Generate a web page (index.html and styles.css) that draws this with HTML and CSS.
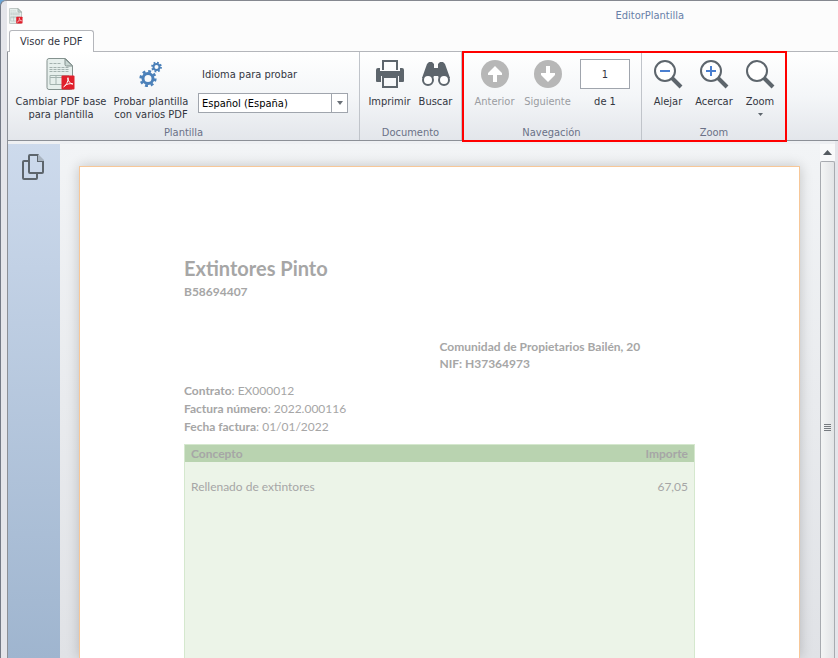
FILE: index.html
```html
<!DOCTYPE html>
<html lang="es">

<head>
  <meta charset="UTF-8">
  <meta name="viewport" content="width=device-width, initial-scale=1.0">
  <title>EditorPlantilla</title>
  <link rel="stylesheet" href="styles.css">
</head>

<body>
  <svg class="defs" width="0" height="0" aria-hidden="true">
    <symbol id="pdf-doc" viewBox="0 0 29 32">
      <path d="M2.500 .5h16.500l7 7v22a2 2 0 0 1-2 2h-21.500a2 2 0 0 1-2-2v-27a2 2 0 0 1 2-2z" fill="#e6efec" stroke="#84928f" />
      <path d="M18.500 1v5.500a1.500 1.500 0 0 0 1.500 1.500h6z" fill="#c8d6d2" stroke="#84928f" />
      <path d="M3 5.500h11M3 9.500h20M3 11.500h20M3 13.500h20" stroke="#a3b1ae" stroke-dasharray="3 1" />
      <path d="M3.500 17.500h19v9h-19zM3.500 19.500h19M9.500 17.500v9" fill="none" stroke="#a3b3af" />
      <rect x="15" y="17.500" width="13" height="14" rx="1" fill="#e01f2b" />
      <path d="M17 29c2-1 5-5 4.500-9.500M21.300 20c.2 3 2 5.500 5 6M18 28c2-2 5-2.800 8.500-2" fill="none" stroke="#fff" />
    </symbol>
  </svg>

  <div class="window">
    <header class="titlebar">
      <svg class="app-icon"><use href="#pdf-doc" /></svg>
      <h1 class="title">EditorPlantilla</h1>
    </header>

    <nav class="tabs">
      <button class="tab" type="button">Visor de PDF</button>
    </nav>

    <div class="ribbon">
      <section class="group group-template">
        <div class="tools">
          <button class="tool tool-base" type="button">
            <svg class="icon"><use href="#pdf-doc" /></svg>
            <span>Cambiar PDF base<br>para plantilla</span>
          </button>
          <button class="tool tool-test" type="button">
            <svg class="icon" viewBox="0 0 32 32" fill="none" stroke="#4b80b9">
              <circle cx="13" cy="20.500" r="5" stroke-width="3" />
              <circle cx="13" cy="20.500" r="7.300" stroke-width="2.600" stroke-dasharray="2.870 2.863" />
              <circle cx="21.500" cy="9" r="3" stroke-width="2" />
              <circle cx="21.500" cy="9" r="4.500" stroke-width="1.800" stroke-dasharray="1.770 1.764" />
            </svg>
            <span>Probar plantilla<br>con varios PDF</span>
          </button>
          <div class="language">
            <label for="language">Idioma para probar</label>
            <div class="select">
              <select id="language">
                <option>Español (España)</option>
              </select>
            </div>
          </div>
        </div>
        <h2 class="caption">Plantilla</h2>
      </section>

      <section class="group group-document">
        <div class="tools">
          <button class="tool" type="button">
            <svg class="icon" viewBox="0 0 32 32">
              <path d="M8 2h16v10h-2V4H10v8H8z" fill="#5d656c" />
              <path d="M2 12a2 2 0 0 1 2-2h2v3h20v-3h2a2 2 0 0 1 2 2v11a1 1 0 0 1-1 1h-4v-6H7v6H3a1 1 0 0 1-1-1z" fill="#5d656c" />
              <path d="M8 18h16v12H8zM10 20v8h12v-8z" fill="#5d656c" fill-rule="evenodd" />
            </svg>
            <span>Imprimir</span>
          </button>
          <button class="tool" type="button">
            <svg class="icon" viewBox="0 0 32 32">
              <path d="M9 4h3l2 2v4h4V6l2-2h3l2 2 5 14-6 1-3 3-3-6h-4l-3 6-3-3-6-1L7 6z" fill="#5d656c" />
              <circle cx="8" cy="22" r="5" fill="#fff" stroke="#5d656c" stroke-width="2" />
              <circle cx="24" cy="22" r="5" fill="#fff" stroke="#5d656c" stroke-width="2" />
            </svg>
            <span>Buscar</span>
          </button>
        </div>
        <h2 class="caption">Documento</h2>
      </section>

      <div class="highlight">
        <section class="group group-navigation">
          <div class="tools">
            <button class="tool" type="button" disabled>
              <svg class="icon" viewBox="0 0 32 32">
                <circle cx="16" cy="16" r="14" fill="#b7b7b7" />
                <path d="M16 8l7 7v2h-5v7h-4v-7H9v-2z" fill="#fff" />
              </svg>
              <span>Anterior</span>
            </button>
            <button class="tool" type="button" disabled>
              <svg class="icon" viewBox="0 0 32 32">
                <circle cx="16" cy="16" r="14" fill="#b7b7b7" />
                <path d="M16 24l7-7v-2h-5V8h-4v7H9v2z" fill="#fff" />
              </svg>
              <span>Siguiente</span>
            </button>
            <div class="page-number">
              <input id="page" type="text" value="1">
              <label for="page">de 1</label>
            </div>
          </div>
          <h2 class="caption">Navegación</h2>
        </section>

        <section class="group group-zoom">
          <div class="tools">
            <button class="tool" type="button">
              <svg class="icon" viewBox="0 0 32 32" fill="none">
                <path d="M20 20l9 9" stroke="#5d656c" stroke-width="4" />
                <circle cx="13" cy="13" r="10" fill="#fff" stroke="#5d656c" stroke-width="2" />
                <path d="M8 13h10" stroke="#4a7fd0" stroke-width="2" />
              </svg>
              <span>Alejar</span>
            </button>
            <button class="tool" type="button">
              <svg class="icon" viewBox="0 0 32 32" fill="none">
                <path d="M20 20l9 9" stroke="#5d656c" stroke-width="4" />
                <circle cx="13" cy="13" r="10" fill="#fff" stroke="#5d656c" stroke-width="2" />
                <path d="M8 13h10M13 8v10" stroke="#4a7fd0" stroke-width="2" />
              </svg>
              <span>Acercar</span>
            </button>
            <button class="tool" type="button">
              <svg class="icon" viewBox="0 0 32 32" fill="none">
                <path d="M20 20l9 9" stroke="#5d656c" stroke-width="4" />
                <circle cx="13" cy="13" r="10" fill="#fff" stroke="#5d656c" stroke-width="2" />
              </svg>
              <span>Zoom</span>
              <svg class="caret" viewBox="0 0 5 3"><path d="M0 0h5L2.500 3z" fill="#5d656c" /></svg>
            </button>
          </div>
          <h2 class="caption">Zoom</h2>
        </section>
      </div>
    </div>

    <main class="workspace">
      <aside class="sidebar">
        <button class="pages-btn" type="button" aria-label="Páginas">
          <svg class="pages-icon" viewBox="0 0 22 26" fill="none" stroke="#5d656c" stroke-width="2">
            <path d="M6 7H2a1 1 0 0 0-1 1v16a1 1 0 0 0 1 1h12a1 1 0 0 0 1-1v-4" />
            <path d="M16 1H8a1 1 0 0 0-1 1v16a1 1 0 0 0 1 1h12a1 1 0 0 0 1-1V7h-5z" />
            <path d="M16 0l6 6v1h-6z" fill="#a9b4c0" stroke="none" />
          </svg>
        </button>
      </aside>

      <div class="viewer">
        <article class="page">
          <h2 class="company">Extintores Pinto</h2>
          <p class="tax-id">B58694407</p>

          <div class="customer">
            <p>Comunidad de Propietarios Bailén, 20</p>
            <p>NIF: H37364973</p>
          </div>

          <div class="details">
            <p><b>Contrato</b>: EX000012</p>
            <p><b>Factura número</b>: 2022.000116</p>
            <p><b>Fecha factura</b>: 01/01/2022</p>
          </div>

          <table class="lines">
            <thead>
              <tr>
                <th>Concepto</th>
                <th class="amount">Importe</th>
              </tr>
            </thead>
            <tbody>
              <tr>
                <td>Rellenado de extintores</td>
                <td class="amount">67,05</td>
              </tr>
            </tbody>
          </table>
        </article>
      </div>

      <div class="scrollbar">
        <button class="scroll-up" type="button" aria-label="Subir">
          <svg class="arrow" viewBox="0 0 9 5"><path d="M4.500 0L9 5H0z" fill="#555b61" /></svg>
        </button>
        <div class="thumb"><span class="grip"></span></div>
      </div>
    </main>
  </div>
</body>

</html>
```
FILE: styles.css
```css
* {
  box-sizing: border-box;
}

body {
  margin: 0;
  height: 100vh;
  overflow: hidden;
  background-color: #6aa5d8;
  font: 11px/13px "DejaVu Sans Condensed", "DejaVu Sans", sans-serif;
  color: #33363f;
}

h1,
h2,
p {
  margin: 0;
  font: inherit;
}

button,
input,
select {
  margin: 0;
  padding: 0;
  font: inherit;
  color: inherit;
}

button {
  background: none;
  border: none;
}

svg {
  display: block;
}

.defs {
  position: absolute;
}

.window {
  height: 100vh;
  display: flex;
  flex-direction: column;
  padding: 0 3px 0 6px;
  background-color: #e4e5ea;
  border-top: 1px solid #858890;
  border-left: 1px solid #747a86;
  border-top-left-radius: 6px;
}

.titlebar {
  height: 29px;
  flex: none;
  display: flex;
  justify-content: space-between;
  align-items: center;
  padding: 0 154px 0 2px;
  margin-right: -3px;
  background-color: #fcfcfc;
}

.app-icon {
  width: 14px;
  height: 16px;
}

.title {
  color: #6880a8;
}

.tabs {
  height: 22px;
  flex: none;
  margin-right: -3px;
  padding-left: 2px;
  background-color: #fcfcfc;
  border-bottom: 1px solid #b4b6bb;
}

.tab {
  height: 22px;
  padding: 0 10px;
  background-color: #fff;
  border: 1px solid #b4b6bb;
  border-bottom: none;
  border-radius: 3px 3px 0 0;
}

.ribbon {
  height: 89px;
  flex: none;
  display: flex;
  margin-right: -3px;
  background: linear-gradient(#fff, #f4f6f8 50%, #e3e6eb);
  border-left: 1px solid #8c9097;
  border-bottom: 1px solid #8c9097;
}

.group {
  display: flex;
  flex-direction: column;
  justify-content: space-between;
  padding: 6px 0 1px;
  border-right: 1px solid #c0c4ca;
}

.tools {
  display: flex;
  justify-content: center;
}

.caption {
  text-align: center;
  color: #6a7187;
}

.group-template {
  width: 352px;
}

.group-template .tools {
  justify-content: flex-start;
  padding-left: 4px;
}

.group-document {
  width: 102px;
}

.group-document .tools {
  padding-left: 4px;
}

.group-navigation {
  width: 180px;
}

.group-navigation .tools {
  justify-content: flex-start;
  padding-left: 6px;
}

.group-zoom {
  width: 145px;
}

/* frame drawn over the ribbon edges */
.highlight {
  display: flex;
  position: relative;
}

.highlight::after {
  content: "";
  position: absolute;
  inset: -1px 0 -2px;
  border: 2px solid #f00;
  pointer-events: none;
}

.tool {
  width: 46px;
  display: flex;
  flex-direction: column;
  align-items: center;
  justify-content: flex-start;
  gap: 5px;
  white-space: nowrap;
}

.tool:disabled {
  color: #9a9ca1;
}

.tool-base {
  width: 98px;
}

.tool-test {
  width: 82px;
}

.group-navigation .tool {
  width: 53px;
}

.icon {
  width: 32px;
  height: 32px;
}

.caret {
  width: 5px;
  height: 3px;
}

.language {
  display: flex;
  flex-direction: column;
  gap: 12px;
  padding: 10px 0 0 6px;
}

.language label {
  padding-left: 4px;
}

.select {
  position: relative;
  width: 150px;
}

.select select {
  width: 100%;
  height: 20px;
  padding: 0 18px 0 3px;
  appearance: none;
  background: linear-gradient(#a0a5ad, #a0a5ad) right 15px top / 1px 100% no-repeat, #fff;
  border: 1px solid #a0a5ad;
  border-radius: 0;
  color: #000;
}

.select::after {
  content: "";
  position: absolute;
  top: 8px;
  right: 5px;
  border: 3px solid transparent;
  border-top: 4px solid #6a7077;
  border-bottom: none;
}

.page-number {
  display: flex;
  flex-direction: column;
  align-items: center;
  gap: 6px;
  padding: 1px 0 0 6px;
}

.page-number input {
  width: 50px;
  height: 30px;
  background-color: #fff;
  border: 1px solid #a0a5ad;
  text-align: center;
}

.workspace {
  flex: 1;
  min-height: 0;
  display: flex;
  padding-top: 3px;
  background-color: #eef0f3;
  border-left: 1px solid #8c9097;
}

.sidebar {
  width: 52px;
  flex: none;
  background: linear-gradient(#cddaec, #9fb5cf);
}

.pages-btn {
  padding: 10px 14px;
}

.pages-icon {
  width: 22px;
  height: 26px;
}

.viewer {
  flex: 1;
  min-width: 0;
  padding: 22px 20px 0 19px;
  background: linear-gradient(#f2f4f6, #e0e2e6);
  overflow: hidden;
}

.page {
  height: 100%;
  display: flex;
  flex-direction: column;
  padding: 89px 104px 0;
  background-color: #fff;
  border: 1px solid #f7c798;
  border-bottom: none;
  box-shadow: 0 0 12px #0003;
  font: 12px/17px Lato, "Open Sans", sans-serif;
  color: #a6a6a6;
}

.company {
  font-size: 20px;
  font-weight: 700;
  line-height: 24px;
}

.tax-id {
  margin-top: 3px;
  font-weight: 700;
}

.customer {
  margin: 38px 0 10px 50%;
  font-weight: 700;
  white-space: nowrap;
}

.details {
  line-height: 18px;
}

.lines {
  width: 100%;
  flex: 1;
  display: flex;
  flex-direction: column;
  margin-top: 8px;
  background-color: #ecf4e8;
  border: 1px solid #d5e8ce;
  border-bottom: none;
}

.lines tr {
  display: flex;
  justify-content: space-between;
  padding: 0 6px;
}

.lines th,
.lines td {
  padding: 0;
  text-align: left;
}

.lines thead {
  background-color: #b9d3b0;
}

.lines tbody {
  padding-top: 16px;
}

.lines .amount {
  text-align: right;
}

.scrollbar {
  width: 15px;
  flex: none;
  display: flex;
  flex-direction: column;
}

.scroll-up {
  height: 17px;
  display: flex;
  align-items: center;
  justify-content: center;
  background-color: #f8f9fa;
}

.arrow {
  width: 9px;
  height: 5px;
}

.thumb {
  flex: 1;
  display: flex;
  justify-content: center;
  background: linear-gradient(to right, #f4f5f5, #e2e4e6);
  border: 1px solid #a8abb0;
  border-bottom: none;
  border-radius: 2px 2px 0 0;
}

.grip {
  width: 7px;
  height: 7px;
  margin-top: 262px;
  background: repeating-linear-gradient(#777b80 0 1px, transparent 1px 2px);
}
```
